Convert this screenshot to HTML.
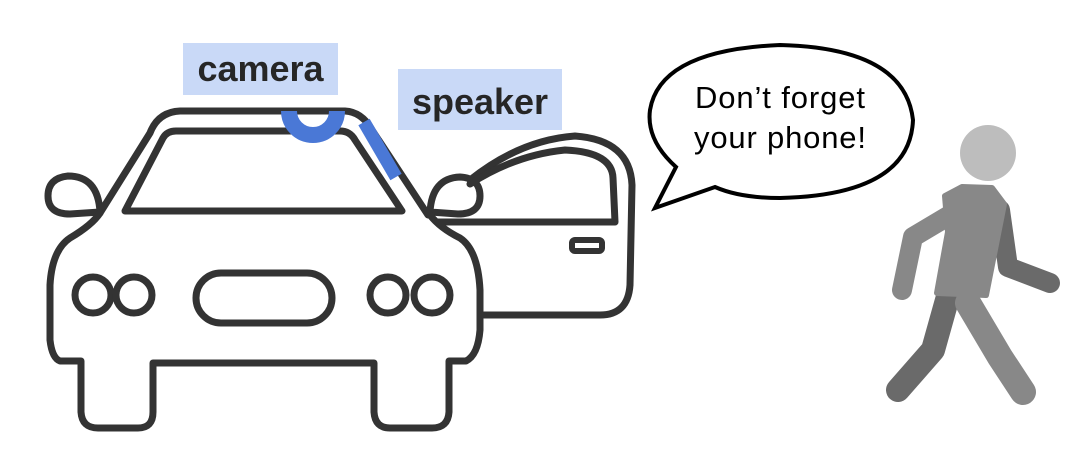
<!DOCTYPE html>
<html><head><style>
html,body{margin:0;padding:0;background:#fff;}
body{width:1085px;height:455px;overflow:hidden;position:relative;font-family:"Liberation Sans",sans-serif;}
.lbl{position:absolute;background:#c9d9f7;color:#262626;font-size:36px;font-weight:bold;line-height:52px;text-align:center;}
</style></head><body>
<svg width="1085" height="455" style="position:absolute;left:0;top:0">
<g fill="none" stroke="#333" stroke-width="7" stroke-linejoin="round" stroke-linecap="round">
 <path d="M100,213 L150,133 Q158,112 180,111 L345,111 Q362,112 372,130 L428,215"/>
 <path d="M125,211 L163,138 Q167,131 176,131 L340,131 Q350,131 355,140 L402,211 Z"/>
 <path d="M100,212 Q98,176 68,176 Q48,178 48,196 Q48,214 70,214 Z"/>
 <path d="M430,212 Q432,178 460,177 Q480,178 480,196 Q480,214 458,214 Z"/>
 <path d="M100,213 Q92,225 70,238 Q52,250 50,285 L50,340 Q52,358 60,361 L81,361 L81,412 Q82,428 98,428 L138,428 Q153,428 153,412 L153,363 L374,363 L374,412 Q375,428 390,428 L432,428 Q448,428 449,412 L449,361 L466,361 Q478,355 480,330 L480,290 Q478,250 460,238 Q440,228 430,215"/>
 <path d="M470,180 Q520,140 575,136 Q630,140 632,185 L630,285 Q628,315 600,315 L484,315"/>
 <path d="M470,184 Q515,155 565,150 Q612,152 613,178 L615,222 L438,222"/>
 <rect x="572" y="240" width="30" height="11" rx="3" stroke-width="6"/>
 <circle cx="93" cy="295" r="18"/><circle cx="134" cy="295" r="18"/>
 <circle cx="388" cy="295" r="18"/><circle cx="432" cy="295" r="18"/>
 <rect x="196" y="273" width="136" height="50" rx="25"/>
</g>
<path d="M289,111 A24,24 0 0 0 337,111" fill="none" stroke="#4a78d6" stroke-width="16"/>
<line x1="364" y1="122" x2="396" y2="177" stroke="#4a78d6" stroke-width="13"/>
<path d="M676,167 Q646,140 650,110 Q660,50 780,45 Q905,48 913,120 Q910,195 780,198 Q740,198 715,187 L655,208 Z" fill="#fff" stroke="#000" stroke-width="4" stroke-linejoin="miter"/>
<text x="780" y="108" font-family="Liberation Sans,sans-serif" font-size="31" text-anchor="middle" fill="#000" textLength="170">Don’t forget</text>
<text x="780" y="148" font-family="Liberation Sans,sans-serif" font-size="31" text-anchor="middle" fill="#000" textLength="172">your phone!</text>
<g stroke-linecap="round" stroke-linejoin="round" fill="none">
 <path d="M1000,210 L1008,267 L1050,283" stroke="#6a6a6a" stroke-width="20"/>
 <path d="M947,300 L933,350 L898,390" stroke="#6a6a6a" stroke-width="24"/>
 <path d="M955,212 L913,237 L902,290" stroke="#888" stroke-width="20"/>
 <path d="M968,303 L1000,357 L1023,392" stroke="#888" stroke-width="26"/>
</g>
<polygon points="945,196 962,187 992,188 1004,204 986,295 937,293 948,232" fill="#888" stroke="#888" stroke-width="6" stroke-linejoin="round"/>
<circle cx="988" cy="153" r="28" fill="#bdbdbd"/>
</svg>
<div class="lbl" style="left:183px;top:43px;width:155px;">camera</div>
<div class="lbl" style="left:398px;top:69px;width:164px;height:61px;line-height:66px;">speaker</div>
</body></html>
